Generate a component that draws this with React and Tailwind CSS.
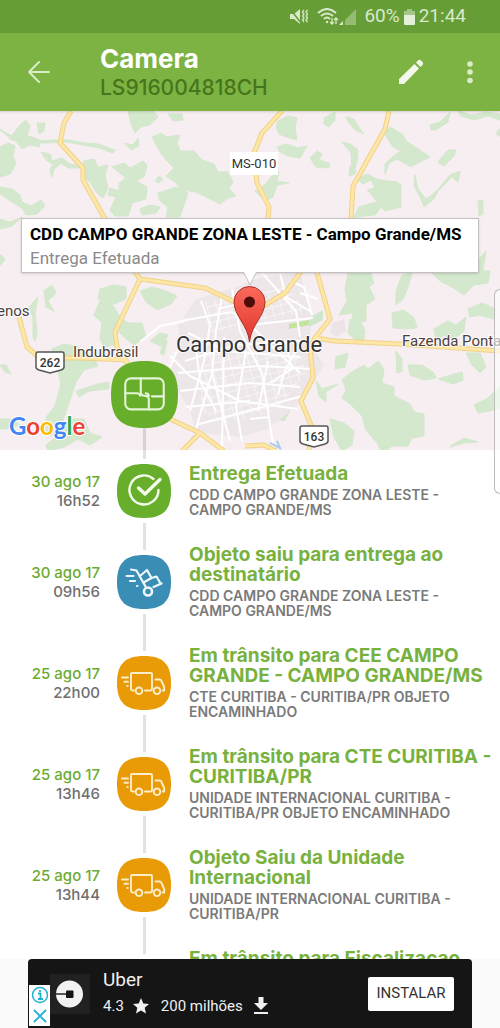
import React from 'react'

const GREEN = '#67af2a'
const BLUE = '#3a8db5'
const ORANGE = '#e99b07'

const events = [
  {
    date: '30 ago 17',
    time: '16h52',
    icon: 'check',
    title: 'Entrega Efetuada',
    place: 'CDD CAMPO GRANDE ZONA LESTE - CAMPO GRANDE/MS'
  },
  {
    date: '30 ago 17',
    time: '09h56',
    icon: 'trolley',
    title: 'Objeto saiu para entrega ao destinatário',
    place: 'CDD CAMPO GRANDE ZONA LESTE - CAMPO GRANDE/MS'
  },
  {
    date: '25 ago 17',
    time: '22h00',
    icon: 'truck',
    title: 'Em trânsito para CEE CAMPO GRANDE - CAMPO GRANDE/MS',
    place: 'CTE CURITIBA - CURITIBA/PR OBJETO ENCAMINHADO'
  },
  {
    date: '25 ago 17',
    time: '13h46',
    icon: 'truck',
    title: 'Em trânsito para CTE CURITIBA - CURITIBA/PR',
    place: 'UNIDADE INTERNACIONAL CURITIBA - CURITIBA/PR OBJETO ENCAMINHADO'
  },
  {
    date: '25 ago 17',
    time: '13h44',
    icon: 'truck',
    title: 'Objeto Saiu da Unidade Internacional',
    place: 'UNIDADE INTERNACIONAL CURITIBA - CURITIBA/PR'
  },
  {
    date: '25 ago 17',
    time: '13h40',
    icon: 'truck',
    title: 'Em trânsito para Fiscalizacao Aduaneira - CURITIBA/PR',
    place: 'UNIDADE INTERNACIONAL CURITIBA - CURITIBA/PR OBJETO ENCAMINHADO'
  }
]

// Vegetation patches
const woods = [
  'M20 14l6-5 4 6-3 10 8 2 6 3-2 6-9-2-8 4-6-8-7-2z',
  'M37 12l8 0-1 8-5 3z',
  'M0 36l8-4 7 3-2 10 3 8-6 10-10 3z',
  'M0 18l10 6 12 4 16 2 14-1 18 0 14 3 14 1 17 6-2 3-14-5-16-3-16-3-22 1-22-2-14-4-9-7z',
  'M41 41l9 2 2 7 10-3 8 6 11 2 0 2-13 0-7-5-7 6-2 8-2-7 3-6-6-3z',
  'M0 76l12 2 8 6 2 7 9 4 10-6 4 6-8 8-11 1-4-7-10-6-12-8z',
  'M0 108l10 3 12-5-10 9-12 3z',
  'M0 143l5 5-5 7z',
  'M84 50l10-2 4 8 10-2-3 10 3 13-5 10-7-6-6-10-8-6z',
  'M112 56l12-4 6 5 13-7 4 4-3 12-8 4 11 6-1 12-14 4-4 13-13 0-5-6 6-13-8-2 2-7 9 3 0-8 7-5z',
  'M128 0l25 0 5 6-8 8-9 2-6 6-4-9z',
  'M124 32l9 2 5-7 1 8-8 4z',
  'M152 26l10-4 4 4 14-2-3 8 3 8 14 0 8 9 12 4 4 8 10 0 5 10-4 6 7 8-8 2-8 6-12-6-12-6-14-2-7-8-9-6 8-8-8-8-6-8z',
  'M158 82l18-6 12 6-4 12-4 12-14 0 2-10-8-6z',
  'M140 98l10-4 10 2-4 6-14 2z',
  'M155 70l4-5 4 3-4 4z',
  'M168 3l14 0 1 6-10 1z',
  'M278 10l10-5 9 2-2 10 2 12-8-2-10-4-3-7z',
  'M277 36l9-3 12 4 9-2-7 12-12-2-8-4z',
  'M324 7l11-6 0 8-6 7-5-3z',
  'M346 6l8 2 6 10 4 5-9-4-6-7z',
  'M310 47l7-7 5 3-3 6 10 3 0 5-13-1z',
  'M342 31l8 2 8 6-1 12-5 6-1-15z',
  'M350 55l6-2-1 10-6 2z',
  'M384 22l6-6 13 8 3 6 18 12 6 4-12 6-7 4-14-8-8 4-4 11 0-10 10-9 6-4-8-4z',
  'M357 68l10-5 12 6 18 2 4 3 0 22-16 4-4-4-6 8-21 2 5-10 10-3 8-2-6-8-4-4 8-2-4-8-8 4z',
  'M430 14l10-3 10-10-2 10-12 8-5 0z',
  'M440 48l8-9 8 0-2 6-10 10-6-4z',
  'M415 64l3 14 8 10 6-4 8-8 10-12 10-4-2 11-6-5-14 14-4 8-10 8-4-10-6-12z',
  'M458 0l14 4 14-3 14 2 0 6-12-4-14 4-13-4z',
  'M497 20l3-2 0 7-3-1z',
  'M255 80l10-6 6-8 8-6-2 10 12 2-12 2-4 12-8 4z',
  'M100 178l14-4 12 2 0 12-14 6-14-6z',
  'M140 180l12-4 14 4 11 5-6 8-14 6-11-8z',
  'M100 190l14 6 6 10 8 6 14 0 4 14-12 8-10-8-6-6-4 14-10 2-4-8 2-16-8-8z',
  'M52 238l12-5 12 2 18 12 4 8-14 4-8 12-6 18-4 12-8 22-8 2-7-4 4-16 8-10 6-22z',
  'M76 280l22-7 11-2 0 7-20 2-10 6z',
  'M38 186l-3 16 2 20-2 8-2-4 0-20-4-10z',
  'M44 180l8-6 4 8-8 8 6 10-8-4z',
  'M0 308l12 0 8 6-14 4-6 0z',
  'M70 308l14 0 6 14 12 4-12 8-12-6-14 8-16 4-2-6 10-8z',
  'M0 254l6 0 5 9-6-2z',
  'M150 230l10-8 8 2-6 12z',
  'M348 162l22-2 4 12-5 4 6 12-9 6 0 16-14 2 1-10-14 2 8-14-2-12z',
  'M350 208l10 2 5 10-1 8-8 2-8-8z',
  'M392 202l12-3 10 8 3 10-12 1-12-1z',
  'M402 164l10-2-4 14-5 12-7 6 0-14z',
  'M430 160l60 0-2 12-14 2-10 10-12-8-12-6z',
  'M434 218l14-8 8 4 10-8-2 14-10 8-10-4-8 6z',
  'M468 198l14-6 14 6-2 10-14-4-10 2z',
  'M350 262l14-8 4 4 10-8 6 8-2 14 12 4 0 9 16 8 4 8 10 2 0 22-12 2-4 8-16 0-10 8-4-10-12-14-4-14-12-12-8-6 4-8-4-10z',
  'M408 254l14 0 12 8 2 5-12 2-14-5z',
  'M438 268l16-5 8-2 1 8-10 4z',
  'M396 240l6 8 0 12-5 2z',
  'M466 242l14 0 6 14-6 6-8-8z',
  'M474 294l14-7 12-12 0 22-10 3-12 2z',
  'M330 308l14 4 10 8-2 14-10 6-8-14z',
  'M452 334l12-7 14 4-14 1-14 4z',
  'M336 246l12-4-3 14-10 2z',
  'M316 270l6 8 16-5-12 8 0 10-7-6z',
  'M282 276l12-6 6 6-8 10-12 2z',
  'M278 304l12-4-6 10-8-2z',
  'M160 242l5-13 2 1-3 14z',
  'M348 158l30 0-2-4-20-2z',
  'M478 90l5-1 0 14-4 2z',
  'M479 148l7-8-3 20-5 3z'
]

const highways = [
  'M71 0L64 12L60 32L83 57L83 69L104 106L133 158L140 168L205 177L237 192',
  'M140 168L115 221L117 236L130 256L150 290L172 309L200 322L224 340',
  'M200 322L182 340',
  'M282 0L262 22L254 42L257 72L269 96L268 108',
  'M389 0L385 18L353 75L351 108',
  'M262 196L285 182L303 158',
  'M316 158L330 208L315 227L335 230L400 233L500 240',
  'M315 227L310 236L313 267L301 290L311 314L309 340',
  'M19 206L27 236L40 247L80 247L128 249',
  'M245 335L264 334L276 340'
]

const streets = [
  'M180 210L232 201L250 214L313 207', 'M140 231L160 215L185 210', 'M185 250L236 234L316 229',
  'M201 190L210 214L204 250L190 300', 'M222 185L216 220L212 262L196 318', 'M170 245L190 265L240 290L298 298',
  'M232 178L240 220L262 262L274 340', 'M262 162L296 200L300 226', 'M280 162L286 186L310 200', 'M250 214L300 262',
  'M188 222L226 240L300 246', 'M178 262L260 255L312 258', 'M180 280L250 272L300 276', 'M186 296L250 290',
  'M196 314L240 302L306 284', 'M212 262L230 330', 'M246 240L236 296L242 330', 'M300 232L284 262L278 284',
  'M268 250L258 300', 'M290 170L304 176L312 204', 'M218 198L250 190L262 182', 'M196 238L200 270L216 300',
  'M224 226L222 340', 'M250 308L270 306', 'M180 232L170 256', 'M286 232L292 258L270 272', 'M300 182L318 188'
]

function TrackMap() {
  return (
    <svg
      viewBox="0 0 500 339"
      preserveAspectRatio="xMidYMid slice"
      className="block h-full w-full"
      role="img"
      aria-label="Mapa de Campo Grande"
    >
      <defs>
        <pattern id="blocks" width="9" height="8" patternUnits="userSpaceOnUse" patternTransform="rotate(-14)">
          <path d="M0 0H9M0 0V8" stroke="#fbf8f9" strokeWidth="1.4" />
        </pattern>
        <linearGradient id="pin" x1="0" y1="0" x2="0" y2="1">
          <stop offset="0" stopColor="#fb6a5c" />
          <stop offset="1" stopColor="#e0352b" />
        </linearGradient>
      </defs>
      <rect width="500" height="339" fill="#f6eef0" />
      <g fill="#d3e8cd" strokeLinejoin="round" stroke="#d3e8cd">
        {woods.map((d) => <path key={d} d={d} />)}
      </g>
      <path d="M196 188L236 176L262 166L300 162L312 200L310 232L324 254L300 292L268 318L240 326L196 322L190 300L168 262L180 238L178 214z" fill="#eee7e9" />
      <path d="M206 240L262 244L300 240L306 262L276 300L226 312L200 300z" fill="url(#blocks)" />
      <path d="M204 190L250 182L290 176L304 200L260 214L212 222z" fill="url(#blocks)" />
      <path d="M332 212l12-4 2 12-10 6-6-4z" fill="#ece4e6" />
      <path d="M289 213l20-4 0 5-20 4z" fill="#c4e49b" />
      <path d="M309 207l14-8 0 10-14 7z" fill="#cfe6cc" />
      <g fill="none" stroke="#fff" strokeWidth="2">
        {streets.map((d) => <path key={d} d={d} />)}
      </g>
      <path d="M184 339l10-14M270 332l10 5-3-7" stroke="#a9cdf0" strokeWidth="2" fill="none" />
      <g fill="none" stroke="#f0d28a" strokeWidth="5" strokeLinejoin="round">
        {highways.map((d) => <path key={d} d={d} />)}
      </g>
      <g fill="none" stroke="#fee6a6" strokeWidth="3" strokeLinejoin="round">
        {highways.map((d) => <path key={d} d={d} />)}
      </g>
      <rect x="230" y="41" width="48" height="23" fill="#fff" />
      <g fontFamily="Roboto, sans-serif" fill="#4a3f3c" stroke="#fff" strokeWidth="2" strokeOpacity="0.8" style={{ paintOrder: 'stroke' }}>
        <text x="254" y="57" fontSize="13" textAnchor="middle" fill="#333">MS-010</text>
        <text x="-8" y="205" fontSize="15">renos</text>
        <text x="73" y="246" fontSize="15">Indubrasil</text>
        <text x="402" y="235" fontSize="15">Fazenda Ponta</text>
        <text x="249" y="241" fontSize="22" textAnchor="middle" fill="#333">Campo Grande</text>
      </g>
      {[['262', 50, 251], ['163', 314, 325]].map(([label, x, y]) => (
        <g key={label} transform={`translate(${x} ${y})`}>
          <path d="M-14 -8q0-2 2-2h24q2 0 2 2v13q0 2-3 3l-11 3-11-3q-3-1-3-3z" fill="#fff" stroke="#555" strokeWidth="1.5" />
          <text y="5" fontSize="12" textAnchor="middle" fontFamily="Roboto, sans-serif" fontWeight="500" fill="#333">{label}</text>
        </g>
      ))}
      <path
        d="M249.500 231C248 214 234 205 234 191a15.500 15.500 0 0 1 31 0C265 205 251 214 249.500 231z"
        fill="url(#pin)"
        stroke="#a8322b"
      />
      <circle cx="249.500" cy="191" r="5.500" fill="#4c0d0b" />
    </svg>
  )
}

const Tile = ({ color, children }) => (
  <svg viewBox="0 0 54 54" className="block h-full w-full" fill="none" strokeLinecap="round" strokeLinejoin="round" aria-hidden="true">
    <path d="M27 0C46 0 54 8 54 27S46 54 27 54 0 46 0 27 8 0 27 0z" fill={color} />
    {children}
  </svg>
)

const StepIcon = ({ name }) => {
  if (name === 'check') {
    return (
      <Tile color={GREEN}>
        <path d="M36.500 15A14.500 14.500 0 1 0 41.500 26" stroke="#f3faec" strokeWidth="2.400" />
        <path d="M21.500 24l6.500 6L43 15.500" stroke="#f3faec" strokeWidth="3.400" />
      </Tile>
    )
  }
  if (name === 'trolley') {
    return (
      <Tile color={BLUE}>
        <g stroke="#eef8fc" strokeWidth="2.200">
          <path d="M14 14.500l5.500 1L28.500 31.500" />
          <circle cx="31" cy="36.500" r="4" strokeWidth="2.600" />
          <path d="M36.500 32L44.500 28.500" />
          <path d="M23 21l7-6 4.500 8M26.500 27.500l8-4.500 5-1.500 4 7" />
          <path d="M9.500 21h7M13 26h5" />
          <path d="M20 31h.5" />
        </g>
      </Tile>
    )
  }
  return (
    <Tile color={ORANGE}>
      <g stroke="#fdedc8" strokeWidth="1.900">
        <path d="M17 34.500h-1.500q-1.500 0-1.500-1.500V18q0-1 1-1h19q1 0 1 1v15q0 1.500-1.500 1.500H28" />
        <path d="M38.500 23.500h4q1.500 0 2 1.500l2.700 6v3.500h-1.500" />
        <circle cx="22" cy="34.800" r="3.300" />
        <circle cx="40" cy="34.800" r="3.300" />
        <path d="M5 21.500h6M7.500 25.800h3.500M10.300 30h.4" />
      </g>
    </Tile>
  )
}

function StatusBar() {
  return (
    <div className="flex h-[33px] items-center justify-end gap-1 bg-[#669d36] pr-[34px] font-['Roboto',sans-serif] text-[19px] text-[#d9e9cb]">
      <svg viewBox="0 0 20 18" className="h-[18px] w-5" fill="#d9e9cb" aria-hidden="true">
        <path d="M1 6h4l6-5v15l-6-5H1z" />
        <path d="M1 1l12 15" stroke="#669d36" strokeWidth="1.500" />
        <path d="M15 2l-1.500 2 1.500 2-1.500 2 1.500 2-1.500 2 1.500 2M18.500 2l-1.500 2 1.500 2-1.500 2 1.500 2-1.500 2 1.500 2" fill="none" stroke="#d9e9cb" strokeWidth="1.300" />
      </svg>
      <svg viewBox="0 0 22 18" className="ml-1 h-[18px] w-[22px]" fill="none" stroke="#d9e9cb" strokeWidth="2" aria-hidden="true">
        <path d="M1 5q9-8 18 0M4 8q6-5 12 0M7 11q3-3 6 0" />
        <circle cx="10" cy="14" r="1.200" fill="#d9e9cb" stroke="none" />
        <path d="M15 10v6M13 14l2 2 2-2M19 16v-6M17 12l2-2 2 2" strokeWidth="1.300" />
      </svg>
      <svg viewBox="0 0 18 18" className="-ml-1 h-[18px] w-[18px]" aria-hidden="true">
        <path d="M17 1v16H6V12z" fill="#94bc72" />
        <path d="M4 13v4H0z" fill="#d9e9cb" />
      </svg>
      <span className="ml-[3px]">60%</span>
      <svg viewBox="0 0 11 16" className="h-4 w-[11px]" aria-hidden="true">
        <path d="M3 0h5v2h3v5H0V2h3z" fill="#a4c686" />
        <path d="M0 6h11v9q0 1-1 1H1q-1 0-1-1z" fill="#e3efd9" />
      </svg>
      <span>21:44</span>
    </div>
  )
}

function Header() {
  return (
    <header className="relative flex h-[78px] items-center bg-[#7cb342] pr-4 pl-[27px] shadow">
      <button type="button" aria-label="Voltar" className="w-[73px] shrink-0">
        <svg viewBox="0 0 24 24" className="h-6 w-6" fill="none" stroke="#dcecc9" strokeWidth="2" strokeLinecap="round" strokeLinejoin="round">
          <path d="M12 2L2 12l10 10M2 12h20" />
        </svg>
      </button>
      <div className="min-w-0 flex-1">
        <h1 className="text-[26px] leading-[31px] font-bold text-white">Camera</h1>
        <p className="text-[21px] leading-7 font-medium text-[#47751d]">LS916004818CH</p>
      </div>
      <button type="button" aria-label="Editar">
        <svg viewBox="0 0 28 28" className="h-7 w-7" fill="#f2f8ea">
          <path d="M2 21L17.500 6l4.500 4.500L7 26H2zM19 4.500l2-2q1.500-1.500 3 0l1.500 1.500q1.500 1.500 0 3l-2 2z" />
        </svg>
      </button>
      <button type="button" aria-label="Mais opções" className="ml-[31px]">
        <svg viewBox="0 0 28 28" className="h-7 w-7" fill="#dcecc9">
          <circle cx="14" cy="6" r="2.800" />
          <circle cx="14" cy="14" r="2.800" />
          <circle cx="14" cy="22.500" r="2.800" />
        </svg>
      </button>
    </header>
  )
}

function MapPanel() {
  return (
    <section className="relative h-[339px] overflow-hidden">
      <TrackMap />
      <div className="absolute inset-x-[21px] top-[107px] border border-[#c4bfc0] bg-white px-2 pt-[3px] pb-[2px] font-['Roboto',sans-serif] text-[17px] leading-6 shadow-sm">
        <p className="font-bold whitespace-nowrap text-black">CDD CAMPO GRANDE ZONA LESTE - Campo Grande/MS</p>
        <p className="text-[#8a8a8a]">Entrega Efetuada</p>
        <svg viewBox="0 0 14 14" className="absolute top-full left-1/2 h-[14px] w-[14px] -translate-x-1/2" aria-hidden="true">
          <path d="M0 -1L7 13L14 -1z" fill="#fff" stroke="#c4bfc0" />
        </svg>
      </div>
      <div
        aria-label="Google"
        className="absolute bottom-[10px] left-[9px] font-['Lato',sans-serif] text-[24px] leading-7 font-bold [paint-order:stroke] [-webkit-text-stroke:2px_white]"
      >
        <span className="text-[#4285f4]">G</span>
        <span className="text-[#ea4335]">o</span>
        <span className="text-[#fbbc05]">o</span>
        <span className="text-[#4285f4]">g</span>
        <span className="text-[#34a853]">l</span>
        <span className="text-[#ea4335]">e</span>
      </div>
      <div className="absolute bottom-0 left-[143px] h-6 w-[3px] bg-[#d5d2d3]" />
      <button type="button" aria-label="Tipo de mapa" className="absolute bottom-[22px] left-[111px] h-[67px] w-[67px]">
        <Tile color={GREEN}>
          <g stroke="#e4f4d6" strokeWidth="1.700">
            <rect x="11.500" y="14" width="31" height="25" rx="4.500" />
            <path d="M24 14v11q0 3 3 3 3.500 0 3.500 3v8M11.500 26h9.500q2 0 2.500 2M33 28.500h9.500M28 26q2 0 2.500 2" />
          </g>
        </Tile>
      </button>
    </section>
  )
}

function Step({ event }) {
  return (
    <li className="flex shrink-0">
      <div className="flex w-[100px] shrink-0 flex-col justify-center text-right text-[15px] leading-[19px] font-medium">
        <span className="text-[#6cab31]">{event.date}</span>
        <span className="text-[#6f6f6f]">{event.time}</span>
      </div>
      <div className="mr-[18px] ml-[17px] flex w-[54px] shrink-0 flex-col items-center gap-[5px]">
        <div className="w-[3px] flex-1 bg-[#e2e2e2]" />
        <div className="h-[54px] w-[54px]">
          <StepIcon name={event.icon} />
        </div>
        <div className="w-[3px] flex-1 bg-[#e2e2e2]" />
      </div>
      <div className="min-w-0 flex-1 py-[14px] pr-2">
        <h2 className="text-[19px] leading-5 font-bold text-[#78b13e]">{event.title}</h2>
        <p className="mt-[3px] text-[14px] leading-[15px] font-semibold text-[#7a7a7a]">{event.place}</p>
      </div>
    </li>
  )
}

function AdBanner() {
  return (
    <aside className="z-10 shrink-0 bg-[#fafafa] px-7">
      <div className="flex h-[69px] items-center rounded-t bg-[#151515] pr-[18px] pl-px font-['Roboto',sans-serif] text-[#f0f0f0]">
        <div className="mb-[2px] flex h-[41px] w-[21px] flex-col items-center justify-around self-end bg-white">
          <button type="button" aria-label="Sobre este anúncio">
            <svg viewBox="0 0 18 18" className="block h-[18px] w-[18px]" fill="none" stroke="#22b0d0" strokeWidth="1.500">
              <circle cx="9" cy="9" r="7.500" />
              <path d="M7 7.500h2.500v5.500M7 13h5M9 4v2" strokeWidth="1.800" />
            </svg>
          </button>
          <button type="button" aria-label="Fechar anúncio">
            <svg viewBox="0 0 18 18" className="block h-[18px] w-[18px]" stroke="#22b0d0" strokeWidth="1.800">
              <path d="M3 3l12 12M15 3L3 15" />
            </svg>
          </button>
        </div>
        <svg viewBox="0 0 40 40" className="h-10 w-10" aria-hidden="true">
          <rect width="40" height="40" fill="#212121" />
          <circle cx="19.500" cy="20" r="13.500" fill="#f2f2f2" />
          <path d="M6 19.300h11v1.400H6z" fill="#151515" />
          <rect x="16" y="16.500" width="7.500" height="7.500" rx="1" fill="#151515" />
        </svg>
        <div className="ml-[13px] min-w-0 flex-1">
          <p className="text-[19px] leading-6">Uber</p>
          <p className="flex items-center text-[15px] leading-7">
            4.3
            <svg viewBox="0 0 16 16" className="mr-3 ml-[9px] h-4 w-4" fill="#f0f0f0" aria-hidden="true">
              <path d="M8 0l2.300 5.400 5.700.5-4.300 3.900L13 15.500 8 12.500 3 15.500l1.300-5.700L0 5.900l5.700-.5z" />
            </svg>
            200 milhões
            <svg viewBox="0 0 14 17" className="ml-[11px] h-[17px] w-[14px]" fill="#f0f0f0" aria-hidden="true">
              <path d="M4.500 0h5v6H14l-7 7-7-7h4.500zM0 15h14v2H0z" />
            </svg>
          </p>
        </div>
        <button type="button" className="h-[34px] w-[86px] rounded-xs bg-white text-[15px] text-[#333]">INSTALAR</button>
      </div>
    </aside>
  )
}

export default function App() {
  return (
    <div className="relative flex h-screen flex-col overflow-hidden bg-white font-['Inter',sans-serif]">
      <StatusBar />
      <div className="relative z-10">
        <Header />
      </div>
      <main className="min-h-0 flex-1 overflow-y-auto [scrollbar-width:none]">
        <MapPanel />
        <ol className="flex flex-col">
          {events.map((event) => <Step key={event.date + event.time} event={event} />)}
        </ol>
      </main>
      <AdBanner />
      <div className="absolute top-[289px] right-0 z-20 h-[205px] w-[6px] rounded-l-md border border-r-0 border-[#bdbdbd] bg-white/60" />
    </div>
  )
}
